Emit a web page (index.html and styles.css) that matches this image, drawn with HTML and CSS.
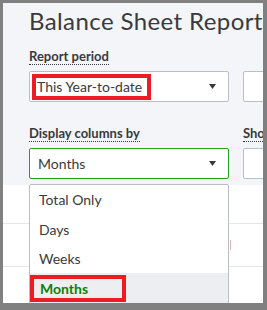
FILE: index.html
```html
<!DOCTYPE html>
<html lang="en">
<head>
  <meta charset="UTF-8" />
  <title>Balance Sheet Report</title>
  <link rel="stylesheet" href="styles.css">
</head>
<body>
  <div class="frame">
    <div class="panel">
      <h1 class="title">Balance Sheet Report</h1>
      <div class="fields">
        <div class="field">
          <div class="label"><span>Report period</span></div>
          <div class="select marked">
            <span class="mark">This Year-to-date</span>
            <svg class="arrow" width="7" height="5" viewBox="0 0 7 5"><path d="M0 0h7L3.5 5z" /></svg>
          </div>
        </div>
        <div class="field">
          <div class="label"><span class="blank"></span></div>
          <div class="select"></div>
        </div>
        <div class="field">
          <div class="label"><span>Display columns by</span></div>
          <div class="select active">
            <span>Months</span>
            <svg class="arrow" width="7" height="5" viewBox="0 0 7 5"><path d="M0 0h7L3.5 5z" /></svg>
          </div>
        </div>
        <div class="field">
          <div class="label"><span>Sho</span></div>
          <div class="select"></div>
        </div>
      </div>
    </div>

    <div class="report">
      <div class="row"></div>
      <div class="row"><i class="tick"></i></div>
    </div>

    <ul class="menu">
      <li>Total Only</li>
      <li>Days</li>
      <li>Weeks</li>
      <li class="current"><span class="mark">Months</span></li>
    </ul>
  </div>
</body>
</html>
```

FILE: styles.css
```css
body {
  margin: 0;
  background: #808080;
  font-family: Lato, "Open Sans", sans-serif;
  color: #393a3d;
}
.frame {
  position: relative;
  margin: 3px 0 0 3px;
  width: 260px;
  height: 300px;
  overflow: hidden;
  background: #fff;
}
.panel {
  box-sizing: border-box;
  height: 182px;
  padding: 2px 0 0 26px;
  background: #f4f5f8;
}
.title {
  margin: 0;
  font-size: 24px;
  line-height: 32px;
  font-weight: 400;
  letter-spacing: 0.4px;
  white-space: nowrap;
}
.fields {
  display: grid;
  grid-template-columns: 200px 200px;
  column-gap: 14px;
  row-gap: 20px;
  margin-top: 8px;
}
.label {
  height: 16px;
  margin-bottom: 10px;
  white-space: nowrap;
}
.label span {
  display: inline-block;
  font-size: 13px;
  line-height: 15px;
  font-weight: 700;
  border-bottom: 1px dotted #393a3d;
}
.label .blank {
  border: none;
}
.select {
  box-sizing: border-box;
  height: 31px;
  display: flex;
  align-items: center;
  justify-content: space-between;
  padding: 0 12px 0 8px;
  background: #fff;
  border: 1px solid #babec5;
  border-radius: 2px;
  font-size: 14px;
}
.select.active {
  border-color: #2ca01c;
}
.select.marked {
  padding-left: 2px;
}
.select .mark {
  box-sizing: border-box;
  width: 119px;
  height: 26px;
  line-height: 18px;
  padding-left: 1px;
  white-space: nowrap;
  border: 4px solid #ed1c24;
}
.arrow {
  fill: #393a3d;
}
.report .row {
  height: 38px;
  border-bottom: 1px solid #e3e6ee;
}
.report .row + .row {
  padding: 16px 0 0 227px;
  height: 26px;
}
.tick {
  display: block;
  width: 1px;
  height: 10px;
  background: #e7b3bb;
}
.menu {
  position: absolute;
  top: 181px;
  left: 26px;
  box-sizing: border-box;
  width: 200px;
  height: 140px;
  margin: 0;
  padding: 0;
  list-style: none;
  background: #fff;
  border: 1px solid #babec5;
  border-radius: 2px;
  font-size: 14px;
}
.menu li {
  height: 29px;
  line-height: 29px;
  padding-left: 9px;
}
.menu li:first-child {
  height: 30px;
  line-height: 30px;
}
.menu li.current {
  height: 40px;
  padding: 2px 0 0;
  background: #eceef2;
  color: #108000;
  font-weight: 700;
}
.menu .mark {
  display: block;
  box-sizing: border-box;
  width: 96px;
  height: 27px;
  line-height: 19px;
  padding-left: 6px;
  border: 4px solid #ed1c24;
}
```
